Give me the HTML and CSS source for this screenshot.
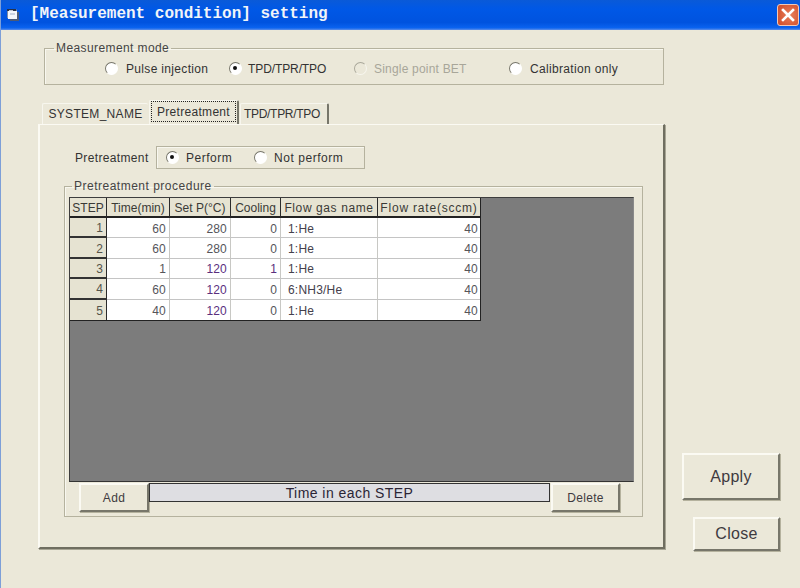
FILE: index.html
```html
<!DOCTYPE html>
<html lang="en">
<head>
<meta charset="utf-8">
<title>[Measurement condition] setting</title>
<link rel="stylesheet" href="styles.css">
</head>
<body>
<div class="window">
  <header class="titlebar">
    <svg class="app-icon" width="14" height="14" viewBox="0 0 14 14"><path d="M3 4h10v9H4z" fill="#4a5a78"/><path d="M1 1h9l1 2v8H2z" fill="#f3f6fa"/><path d="M1 1h9l.6 2H1z" fill="#27324a"/><path d="M3 2h4v.8H3z" fill="#e8ecf4"/><path d="M1 3h1v7H1z" fill="#7f8ca6"/><path d="M4 5h5v2H4z" fill="#c9d2e2"/></svg>
    <h1 class="title">[Measurement condition] setting</h1>
    <button class="close-x" aria-label="Close">
      <svg width="16" height="16" viewBox="0 0 16 16"><path d="M3 3l10 10M13 3L3 13" stroke="#fff" stroke-width="2.6" stroke-linecap="square"/></svg>
    </button>
  </header>
  <div class="client">
    <div class="left">
      <fieldset class="group mode">
        <legend>Measurement mode</legend>
        <div class="mode-row">
          <label class="radio r-pulse"><i class="dot"></i>Pulse injection</label>
          <label class="radio r-tpd"><i class="dot on"></i>TPD/TPR/TPO</label>
          <label class="radio r-bet off"><i class="dot"></i>Single point BET</label>
          <label class="radio r-cal"><i class="dot"></i>Calibration only</label>
        </div>
      </fieldset>
      <div class="tabs">
        <div class="tab t-sys">SYSTEM_NAME</div>
        <div class="tab t-pre"><span>Pretreatment</span></div>
        <div class="tab t-tpd">TPD/TPR/TPO</div>
      </div>
      <section class="panel">
        <div class="pre-row">
          <span class="pre-label">Pretreatment</span>
          <div class="pre-box">
            <label class="radio r-perform"><i class="dot on"></i>Perform</label>
            <label class="radio r-not"><i class="dot"></i>Not perform</label>
          </div>
        </div>
        <fieldset class="group proc">
          <legend>Pretreatment procedure</legend>
          <div class="grid-area">
            <table class="grid">
              <colgroup><col class="c1"><col class="c2"><col class="c3"><col class="c4"><col class="c5"><col class="c6"></colgroup>
              <thead>
                <tr><th>STEP</th><th>Time(min)</th><th>Set P(°C)</th><th>Cooling</th><th class="wide">Flow gas name</th><th class="wider">Flow rate(sccm)</th></tr>
              </thead>
              <tbody>
                <tr><th>1</th><td>60</td><td>280</td><td>0</td><td class="name">1:He</td><td>40</td></tr>
                <tr><th>2</th><td>60</td><td>280</td><td>0</td><td class="name">1:He</td><td>40</td></tr>
                <tr><th>3</th><td>1</td><td class="hl">120</td><td class="hl">1</td><td class="name">1:He</td><td>40</td></tr>
                <tr><th>4</th><td>60</td><td class="hl">120</td><td>0</td><td class="name">6:NH3/He</td><td>40</td></tr>
                <tr><th>5</th><td>40</td><td class="hl">120</td><td>0</td><td class="name">1:He</td><td>40</td></tr>
              </tbody>
            </table>
          </div>
          <div class="actions">
            <button class="btn small add">Add</button>
            <div class="timebar">Time in each STEP</div>
            <button class="btn small">Delete</button>
          </div>
        </fieldset>
      </section>
    </div>
    <div class="right">
      <button class="btn apply">Apply</button>
      <button class="btn close">Close</button>
    </div>
  </div>
</div>
</body>
</html>
```
FILE: styles.css
```css
* { box-sizing: border-box; }
html, body { margin: 0; height: 100%; }
body {
  width: 800px;
  height: 588px;
  overflow: hidden;
  background: #ebe8d9;
  font-family: "Liberation Sans", Arial, sans-serif;
  font-size: 12px;
  color: #333;
}
.window { height: 588px; display: flex; flex-direction: column; border-left: 1px solid #7d9fd8; }
.titlebar {
  height: 30px;
  flex: none;
  display: flex;
  align-items: center;
  padding-left: 5px;
  background: linear-gradient(#0a5ad8 0, #0058e6 30%, #0053df 75%, #0a63f0 93%, #5f8fe8 100%);
  padding-bottom: 2px;
}
.app-icon { flex: none; margin-top: 1px; }
.title {
  margin: 0 0 0 10px;
  flex: 1;
  font: bold 16px "Liberation Mono", monospace;
  color: #f1f4f8;
}
.close-x {
  width: 22px;
  height: 22px;
  margin: 2px 1px 0 0;
  padding: 0;
  border: 1px solid #f0c8b8;
  border-radius: 3px;
  background: radial-gradient(circle at 60% 50%, #e8805c, #cf4a26);
  display: flex;
  align-items: center;
  justify-content: center;
}
.client { flex: 1; display: flex; padding-left: 36px; }
.left { width: 628px; padding-top: 11px; }
.group {
  margin: 0;
  min-width: 0;
  border: 1px solid #b5b29e;
  box-shadow: inset 1px 1px 0 #f8f7ef;
}
.group legend { font-size: 12px; line-height: 14px; letter-spacing: .4px; padding: 0 2px; color: #444; }
.mode {
  margin-left: 7px;
  margin-right: 1px;
  width: 620px;
  height: 44px;
  padding: 0;
}
.mode legend { margin-left: 9px; }
.mode-row { position: relative; height: 27px; display: flex; align-items: center; padding-left: 60px; }
.radio { display: flex; align-items: center; letter-spacing: .33px; white-space: nowrap; }
.r-pulse { width: 124px; }
.r-tpd { width: 125px; letter-spacing: -.1px; }
.r-bet { width: 155px; letter-spacing: .2px; }
.radio .dot { margin-right: 8px; }
.r-tpd .dot { margin-right: 6px; }
.r-bet .dot { margin-right: 7px; }
.off { color: #a8a699; }
.dot {
  width: 13px;
  height: 13px;
  flex: none;
  border-radius: 50%;
  background: #fff;
  border: 1.5px solid;
  border-color: #77766a #fff #fff #77766a;
  position: relative;
}
.off .dot { background: #ebe8d9; border-color: #aaa89b #f7f6ee #f7f6ee #aaa89b; }
.dot.on::after {
  content: "";
  position: absolute;
  left: 3px;
  top: 3px;
  width: 4px;
  height: 4px;
  border-radius: 50%;
  background: #111;
}
.tabs { display: flex; align-items: flex-end; height: 24px; margin-top: 15px; padding-left: 5px; }
.tab {
  height: 21px;
  display: flex;
  align-items: center;
  justify-content: center;
  letter-spacing: .3px;
  border-top: 1px solid #f7f6ee;
  border-left: 1px solid #f7f6ee;
  border-right: 2px solid #77766a;
  border-radius: 2px 2px 0 0;
  color: #333;
}
.t-sys { width: 106px; margin-right: 1px; border-right: 0; }
.t-pre { width: 90px; height: 24px; margin-right: 1px; position: relative; z-index: 1; align-items: flex-start; }
.t-pre span { width: 85px; height: 21px; border: 1px dotted #222; display: flex; align-items: center; justify-content: center; }
.t-tpd { width: 89px; letter-spacing: -.3px; padding-right: 4px; }
.panel {
  width: 627px;
  height: 425px;
  margin-left: 1px;
  padding: 21px 21px 0 24px;
  border: 1px solid;
  border-color: #fbfaf3 #6f6e60 #6f6e60 #fbfaf3;
  border-width: 1px 2px 2px 2px;
  box-shadow: 1px 1px 0 #a8a695;
}
.pre-row { display: flex; align-items: center; height: 23px; margin-left: 11px; }
.pre-label { width: 81px; letter-spacing: .35px; }
.pre-box {
  width: 209px;
  height: 23px;
  display: flex;
  align-items: center;
  padding-left: 9px;
  border: 1px solid #b5b29e;
  box-shadow: inset 1px 1px 0 #f8f7ef;
}
.r-perform { width: 88px; letter-spacing: .5px; }
.r-perform .dot { margin-right: 7px; }
.r-not { letter-spacing: .55px; }
.r-not .dot { margin-right: 7px; }
.proc {
  width: 579px;
  height: 338px;
  margin-top: 10px;
  padding: 4px 8px 0 4px;
}
.proc legend { letter-spacing: .5px; margin-left: 3px; }
.grid-area {
  width: 565px;
  height: 285px;
  background: #7c7c7c;
  border: 1px solid #3d3d3d;
  border-right-color: #8a8a8a;
  border-bottom-color: #333;
}
.grid {
  table-layout: fixed;
  width: 410px;
  border-collapse: separate;
  border-spacing: 0;
  background: #fff;
  font-size: 12px;
  border-right: 1px solid #222;
  border-bottom: 1px solid #222;
}
.c1 { width: 37px; } .c2 { width: 63px; } .c3 { width: 61px; }
.c4 { width: 50px; } .c5 { width: 97px; } .c6 { width: 102px; }
.grid th, .grid td {
  padding: 2px 3px 0 0;
  height: 20.4px;
  font-weight: normal;
  text-align: right;
  white-space: nowrap;
  overflow: hidden;
  letter-spacing: .2px;
}
.grid thead th {
  height: 20px;
  text-align: center;
  background: #e6e3d2;
  border-right: 1px solid #2b2b2b;
  border-bottom: 2px solid #222;
  padding: 1px 0 0;
  letter-spacing: 0;
  color: #3a3a36;
}
.grid thead th.wide { letter-spacing: .6px; }
.grid thead th.wider { letter-spacing: .8px; }
.grid thead th:last-child { border-right: 0; }
.grid tbody th {
  background: #e6e3d2;
  border-right: 1px solid #2b2b2b;
  border-bottom: 2px solid #333;
  color: #55544a;
}
.grid tbody tr:last-child th { border-bottom: 0; }
.grid td {
  color: #55555a;
  border-right: 1px solid #c8c8c4;
  border-bottom: 1px solid #c4c4c4;
}
.grid td:last-child { border-right: 0; padding-right: 2px; }
.grid tr:last-child td { border-bottom: 0; }
.grid td.name { text-align: left; padding-left: 7px; color: #44404c; }
.grid td.hl { color: #5a2f7e; }
.actions { display: flex; align-items: flex-start; margin-top: 1px; padding-left: 10px; }
.btn {
  font: 12px "Liberation Sans", Arial, sans-serif;
  letter-spacing: .3px;
  color: #3e3a40;
  background: #ebe8d9;
  padding: 0;
  border: 2px solid;
  border-color: #fbfaf3 #77766a #77766a #fbfaf3;
  box-shadow: 1px 1px 0 #b5b29e;
}
.small { width: 69px; height: 29px; flex: none; }
.add { width: 70px; }
.timebar {
  width: 401px;
  height: 19px;
  margin-right: 1px;
  flex: none;
  background: #dedee2;
  border: 1px solid #333;
  text-align: center;
  font-size: 14px;
  line-height: 18px;
  color: #2b2535;
  letter-spacing: .45px;
}
.right { flex: 1; display: flex; flex-direction: column; align-items: flex-end; padding: 423px 20px 0 0; }
.apply { width: 98px; height: 47px; font-size: 16px; }
.close { width: 87px; height: 34px; margin-top: 17px; font-size: 16px; }
```
